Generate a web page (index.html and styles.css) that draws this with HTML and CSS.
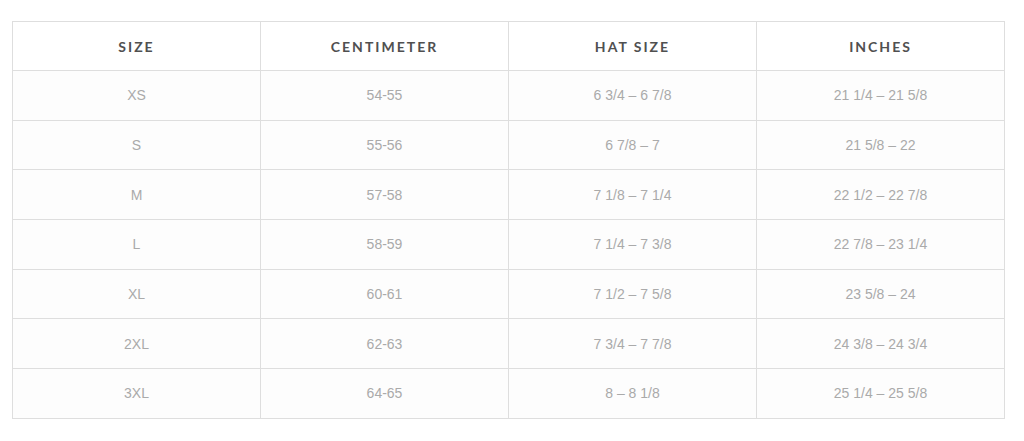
FILE: index.html
```html
<!DOCTYPE html>
<html lang="en">
<head>
<meta charset="utf-8">
<title>Size chart</title>
<link rel="stylesheet" href="styles.css">
</head>
<body>
<div class="wrap">
<table class="chart">
  <thead>
    <tr><th>SIZE</th><th>CENTIMETER</th><th>HAT SIZE</th><th>INCHES</th></tr>
  </thead>
  <tbody>
    <tr><td>XS</td><td>54-55</td><td>6 3/4 – 6 7/8</td><td>21 1/4 – 21 5/8</td></tr>
    <tr><td>S</td><td>55-56</td><td>6 7/8 – 7</td><td>21 5/8 – 22</td></tr>
    <tr><td>M</td><td>57-58</td><td>7 1/8 – 7 1/4</td><td>22 1/2 – 22 7/8</td></tr>
    <tr><td>L</td><td>58-59</td><td>7 1/4 – 7 3/8</td><td>22 7/8 – 23 1/4</td></tr>
    <tr><td>XL</td><td>60-61</td><td>7 1/2 – 7 5/8</td><td>23 5/8 – 24</td></tr>
    <tr><td>2XL</td><td>62-63</td><td>7 3/4 – 7 7/8</td><td>24 3/8 – 24 3/4</td></tr>
    <tr><td>3XL</td><td>64-65</td><td>8 – 8 1/8</td><td>25 1/4 – 25 5/8</td></tr>
  </tbody>
</table>
</div>
</body>
</html>
```
FILE: styles.css
```css
html, body {
  margin: 0;
  padding: 0;
  background: #ffffff;
}
.wrap {
  padding: 21px 0 0 12px;
}
.chart {
  width: 993px;
  border-collapse: collapse;
  table-layout: fixed;
  background: #fdfdfd;
}
.chart th,
.chart td {
  border: 1px solid #dedede;
  text-align: center;
  padding: 0;
}
.chart th {
  height: 48px;
  font-family: Lato, "Open Sans", sans-serif;
  font-weight: 700;
  font-size: 14px;
  letter-spacing: 2px;
  color: #505050;
  background: #ffffff;
}
.chart td {
  height: 48.7px;
  font-family: "Liberation Sans", Arial, sans-serif;
  font-size: 14px;
  color: #aaaaaa;
}
```
